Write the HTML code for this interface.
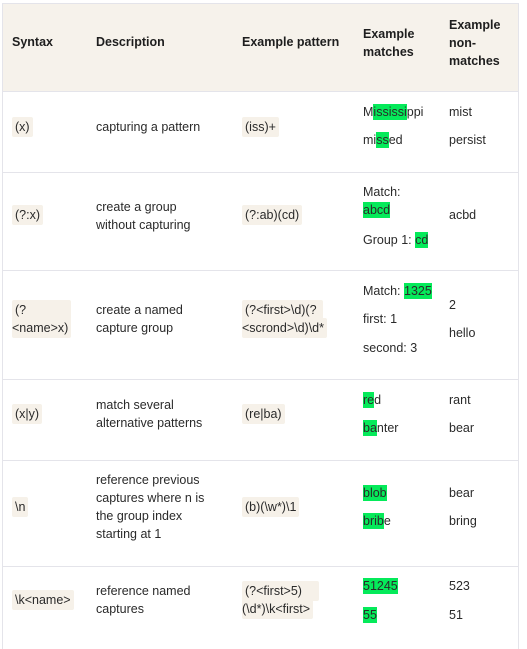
<!DOCTYPE html>
<html><head><style>
body{margin:0;width:527px;height:649px;background:#fff;position:relative;font-family:"Liberation Sans",sans-serif;font-size:12.5px;color:#2a2a2a;overflow:hidden}
.t{position:absolute;line-height:18px;white-space:nowrap}
.h{font-weight:bold;color:#1e1e1e}
.c{background:#f6f1e9;border-radius:2px;padding:3px 3px}
.g{background:#05ea5a;padding:1px 0}
.l{position:absolute;left:2px;width:517px;height:1px;background:#e4e4ea}
</style></head><body>
<div style="position:absolute;left:2px;top:3px;width:517px;height:88px;background:#f6f2eb"></div>
<div style="position:absolute;left:2px;top:3px;width:1px;height:646px;background:#e4e4ea"></div>
<div style="position:absolute;left:518px;top:3px;width:1px;height:646px;background:#e4e4ea"></div>
<div class="l" style="top:3px"></div>
<div class="l" style="top:91px"></div>
<div class="l" style="top:172px"></div>
<div class="l" style="top:270px"></div>
<div class="l" style="top:379px"></div>
<div class="l" style="top:460px"></div>
<div class="l" style="top:566px"></div>

<div class="t h" style="left:12px;top:33px">Syntax</div>
<div class="t h" style="left:96px;top:33px">Description</div>
<div class="t h" style="left:242px;top:33px">Example pattern</div>
<div class="t h" style="left:363px;top:25px">Example<br>matches</div>
<div class="t h" style="left:449px;top:16px">Example<br>non-<br>matches</div>

<div class="t" style="left:12px;top:118px"><span class="c">(x)</span></div>
<div class="t" style="left:96px;top:118px">capturing a pattern</div>
<div class="t" style="left:242px;top:118px"><span class="c">(iss)+</span></div>
<div class="t" style="left:363px;top:103px">M<span class="g">ississi</span>ppi</div>
<div class="t" style="left:363px;top:131px">mi<span class="g">ss</span>ed</div>
<div class="t" style="left:449px;top:103px">mist</div>
<div class="t" style="left:449px;top:131px">persist</div>

<div class="t" style="left:12px;top:206px"><span class="c">(?:x)</span></div>
<div class="t" style="left:96px;top:198px">create a group<br>without capturing</div>
<div class="t" style="left:242px;top:206px"><span class="c">(?:ab)(cd)</span></div>
<div class="t" style="left:363px;top:183px">Match:<br><span class="g">abcd</span></div>
<div class="t" style="left:363px;top:231px">Group 1: <span class="g">cd</span></div>
<div class="t" style="left:449px;top:206px">acbd</div>

<div class="t" style="left:12px;top:301px"><span class="c">(?&nbsp;&nbsp;&nbsp;&nbsp;&nbsp;&nbsp;&nbsp;&nbsp;&nbsp;&nbsp;&nbsp;&nbsp;</span><br><span class="c" style="padding-left:0">&lt;name&gt;x)</span></div>
<div class="t" style="left:96px;top:301px">create a named<br>capture group</div>
<div class="t" style="left:242px;top:301px"><span class="c">(?&lt;first&gt;\d)(?&nbsp;</span><br><span class="c" style="padding-left:0">&lt;scrond&gt;\d)\d*</span></div>
<div class="t" style="left:363px;top:282px">Match: <span class="g">1325</span></div>
<div class="t" style="left:363px;top:310px">first: 1</div>
<div class="t" style="left:363px;top:339px">second: 3</div>
<div class="t" style="left:449px;top:296px">2</div>
<div class="t" style="left:449px;top:324px">hello</div>

<div class="t" style="left:12px;top:405px"><span class="c">(x|y)</span></div>
<div class="t" style="left:96px;top:396px">match several<br>alternative patterns</div>
<div class="t" style="left:242px;top:405px"><span class="c">(re|ba)</span></div>
<div class="t" style="left:363px;top:391px"><span class="g">re</span>d</div>
<div class="t" style="left:363px;top:419px"><span class="g">ba</span>nter</div>
<div class="t" style="left:449px;top:391px">rant</div>
<div class="t" style="left:449px;top:419px">bear</div>

<div class="t" style="left:12px;top:498px"><span class="c">\n</span></div>
<div class="t" style="left:96px;top:471px">reference previous<br>captures where n is<br>the group index<br>starting at 1</div>
<div class="t" style="left:242px;top:498px"><span class="c">(b)(\w*)\1</span></div>
<div class="t" style="left:363px;top:484px"><span class="g">blob</span></div>
<div class="t" style="left:363px;top:512px"><span class="g">brib</span>e</div>
<div class="t" style="left:449px;top:484px">bear</div>
<div class="t" style="left:449px;top:512px">bring</div>

<div class="t" style="left:12px;top:591px"><span class="c">\k&lt;name&gt;</span></div>
<div class="t" style="left:96px;top:582px">reference named<br>captures</div>
<div class="t" style="left:242px;top:582px"><span class="c">(?&lt;first&gt;5)&nbsp;&nbsp;&nbsp;&nbsp;</span><br><span class="c" style="padding-left:0">(\d*)\k&lt;first&gt;</span></div>
<div class="t" style="left:363px;top:577px"><span class="g">51245</span></div>
<div class="t" style="left:363px;top:606px"><span class="g">55</span></div>
<div class="t" style="left:449px;top:577px">523</div>
<div class="t" style="left:449px;top:606px">51</div>
</body></html>
